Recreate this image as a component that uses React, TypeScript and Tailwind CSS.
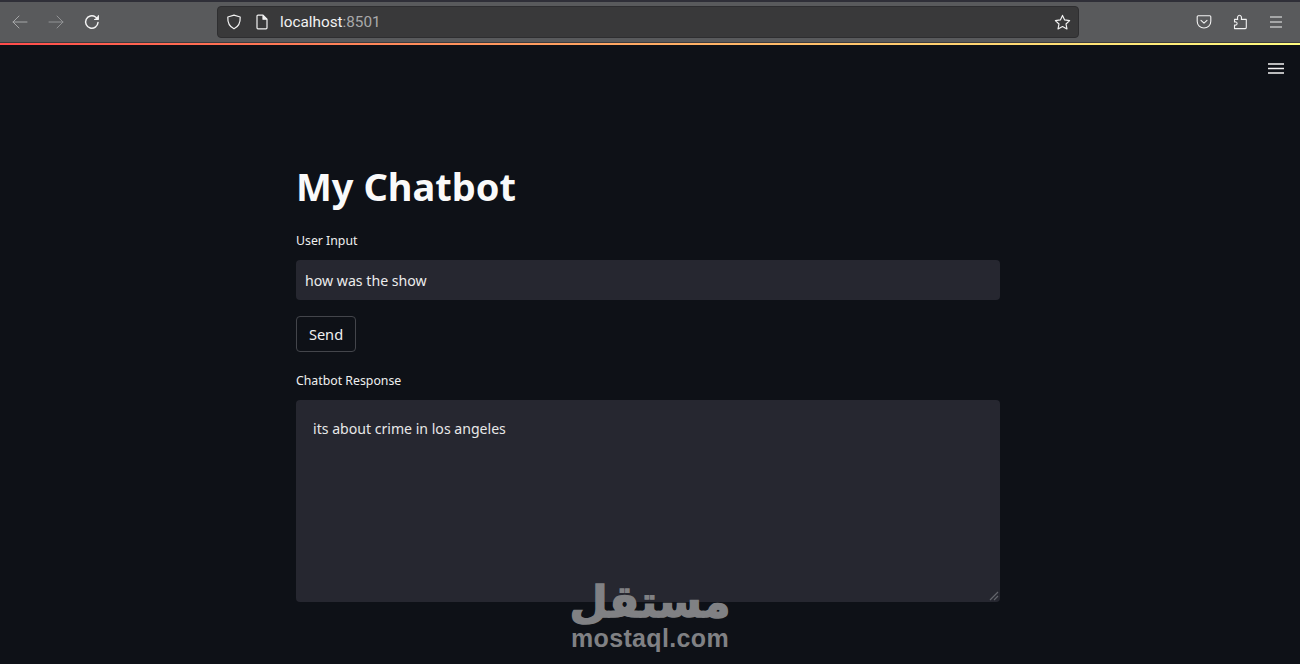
const font = { fontFamily: '"Noto Sans", sans-serif' }

function Toolbar() {
  return (
    <div className="bg-[#595a5c] h-[43px] flex items-center border-t-2 border-b border-t-[#2f2f38] border-b-[#3d3d40]">
      <div className="flex items-center w-[217px] pl-[12px]">
        {/* back */}
        <svg className="w-4 h-4" viewBox="0 0 16 16" fill="none" stroke="#a6a7a8" strokeWidth="1" strokeLinecap="round" strokeLinejoin="round">
          <path d="M1 8h14M7 2 1 8l6 6" />
        </svg>
        {/* forward */}
        <svg className="w-4 h-4 ml-[20px]" viewBox="0 0 16 16" fill="none" stroke="#929395" strokeWidth="1" strokeLinecap="round" strokeLinejoin="round">
          <path d="M1 8h14M9 2l6 6-6 6" />
        </svg>
        {/* reload */}
        <svg className="w-4 h-4 ml-[20px]" viewBox="0 0 16 16" fill="none" stroke="#f4f4f4" strokeWidth="1.5" strokeLinecap="round" strokeLinejoin="round">
          <path d="M14 8.500A6.200 6.200 0 1 1 11.500 3L14 5" />
          <path d="M14.400 1.600v3.900h-3.900" fill="#f4f4f4" strokeWidth="1" />
        </svg>
      </div>
      <div className="w-[862px] h-[32px] bg-[#39393a] border border-[#2e2e30] rounded-[4px] flex items-center pl-[8px] pr-[7px]">
        {/* shield */}
        <svg className="w-4 h-4" viewBox="0 0 16 16" fill="none" stroke="#f2f2f2" strokeWidth="1.2" strokeLinejoin="round">
          <path d="M8 1.200 14.200 3c.3 5.500-1.600 9.600-6.200 11.800C3.400 12.600 1.500 8.500 1.800 3z" />
        </svg>
        {/* page */}
        <svg className="w-4 h-4 ml-[12px]" viewBox="0 0 16 16" fill="none" stroke="#f2f2f2" strokeWidth="1.2" strokeLinejoin="round">
          <path d="M3 2.200c0-.6.4-1 1-1h5l4 4v8.600c0 .6-.4 1-1 1H4c-.6 0-1-.4-1-1z" />
          <path d="M9 1.200v4h4" fill="#f2f2f2" />
        </svg>
        <div className="ml-[10px] text-[15.3px] text-[#f2f2f2] flex-1 pt-[1px]" style={{ fontFamily: 'Roboto, sans-serif' }}>
          localhost<span className="text-[#a9a9aa]">:8501</span>
        </div>
        {/* star */}
        <svg className="w-[17px] h-[17px]" viewBox="0 0 16 16" fill="none" stroke="#f2f2f2" strokeWidth="1.1" strokeLinejoin="round">
          <path d="m8 1.300 2 4.300 4.700.6-3.400 3.200.9 4.700L8 11.800l-4.200 2.300.9-4.700L1.300 6.200 6 5.600z" />
        </svg>
      </div>
      <div className="flex-1 flex items-center justify-end pr-[16px] gap-[20px]">
        {/* pocket */}
        <svg className="w-4 h-4" viewBox="0 0 16 16" fill="none" stroke="#f2f2f2" strokeWidth="1.1" strokeLinecap="round" strokeLinejoin="round">
          <path d="M2.200 1.800h11.600c.6 0 1 .4 1 1v4.400c0 3.900-3 6.800-6.800 6.800S1.200 11.100 1.200 7.200V2.800c0-.6.4-1 1-1z" />
          <path d="m5 6.300 3 2.800 3-2.800" />
        </svg>
        {/* extensions */}
        <svg className="w-4 h-4" viewBox="0 0 16 16" fill="none" stroke="#f2f2f2" strokeWidth="1.1" strokeLinejoin="round">
          <path d="M2.500 14.600V11c1.500.4 2.600-.3 2.600-1.500S4 7.600 2.500 8V5.400h3.200C5 3 6 1.200 7.500 1.200S10 3 9.300 5.400h5v8.200c0 .6-.4 1-1 1z" />
        </svg>
        {/* app menu */}
        <svg className="w-4 h-4" viewBox="0 0 16 16" fill="none" stroke="#f2f2f2" strokeWidth="1.100">
          <path d="M2 3h12M2 8h12M2 13h12" />
        </svg>
      </div>
    </div>
  )
}

export default function App() {
  return (
    <div className="relative w-[1300px] h-[664px] overflow-hidden bg-[#0e1117] text-[#fafafa]" style={font}>
      <Toolbar />
      <div className="h-[2px] bg-gradient-to-r from-[#ff4b4b] to-[#fffd80]" />

      {/* page menu */}
      <div className="flex justify-end pr-[16px] pt-[18px] h-[20px]">
        <svg className="w-[16px] h-[11px]" viewBox="0 0 16 11" fill="none" stroke="#f4f4f4" strokeWidth="1.6">
          <path d="M0 1h16M0 5.500h16M0 10h16" />
        </svg>
      </div>

      <div className="flex justify-center pr-[4px]">
        <div className="w-[704px] pt-[96px]">
          <h1 className="text-[38px] leading-[50px] font-bold">My Chatbot</h1>

          <label className="block mt-[20px] text-[12.3px] leading-[20px] text-[#f0f0f0]">User Input</label>
          <div className="mt-[9px] h-[40px] bg-[#262730] rounded-[4px] flex items-center px-[9px] pt-[2px] text-[14.15px] text-[#ececec]">
            how was the show
          </div>

          <button className="block mt-[16px] w-[60px] h-[36px] rounded-[4px] border border-[#43454b] pt-[2px] text-[14.6px] text-center text-[#f0f0f0]">
            Send
          </button>

          <label className="block mt-[19px] text-[12.3px] leading-[20px] text-[#f0f0f0]">Chatbot Response</label>
          <div className="relative mt-[9px] h-[202px] bg-[#262730] rounded-[4px] px-[17px] pt-[19px] text-[14.1px] leading-[20px] text-[#e8e8e8]">
            its about crime in los angeles
            <svg className="absolute right-[1px] bottom-[1px] w-[11px] h-[11px]" viewBox="0 0 11 11" stroke="#63646b" strokeWidth="1.2">
              <path d="M10 2 2 10M10 6l-4 4" />
            </svg>
          </div>
        </div>
      </div>

      {/* watermark */}
      <div className="absolute left-[550px] top-[578px] w-[200px] text-center text-[#808184]">
        <div
          className="text-[44px] leading-[48px] font-bold [-webkit-text-stroke:1.5px_#808184]"
          style={{ fontFamily: '"DejaVu Sans", sans-serif' }}
          dir="rtl"
          lang="ar"
        >
          مستقل
        </div>
        <div
          className="text-[25px] leading-[24px] font-bold tracking-[0.35px]"
          style={{ fontFamily: '"Liberation Sans", sans-serif' }}
        >
          mostaql.com
        </div>
      </div>
    </div>
  )
}
